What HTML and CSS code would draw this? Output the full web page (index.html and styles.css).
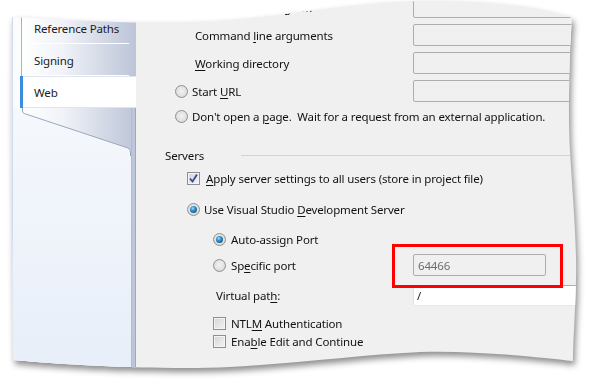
FILE: index.html
```html
<!DOCTYPE html>
<html lang="en">
<head>
  <meta charset="UTF-8" />
  <meta name="viewport" content="width=device-width, initial-scale=1.0" />
  <title>Web - Project Properties</title>
  <link rel="stylesheet" href="styles.css">
</head>
<body>
  <div class="sheet">
    <div class="paper">
      <aside class="nav">
        <div class="tabs">
          <div class="tab">Reference Paths</div>
          <div class="tab">Signing</div>
          <div class="tab active">Web</div>
        </div>
        <div class="nav-rest">
          <div class="nav-panel">
            <svg class="nav-fold" width="118" height="48" viewBox="0 0 118 48">
              <defs>
                <linearGradient id="tabfade" gradientUnits="userSpaceOnUse" x1="9" y1="0" x2="124" y2="0">
                  <stop offset="0" stop-color="#ffffff" />
                  <stop offset="0.35" stop-color="#f1f3f8" />
                  <stop offset="1" stop-color="#bcc4d7" />
                </linearGradient>
              </defs>
              <path d="M9,0 V3 Q9,5 11,5.6 L115,40 Q118,41 118,45 V0 Z" fill="url(#tabfade)" />
              <path d="M9.5,0 V3 Q9.5,5 11.5,5.6 L115,40 Q117.5,41 117.5,45 V48" fill="none" stroke="#9ba6bd" />
            </svg>
          </div>
          <div class="nav-strip"></div>
        </div>
      </aside>

      <main class="page">
        <div class="start">
          <div class="row">
            <div class="row-label"><span class="radio"></span><span>Start e<u>x</u>ternal program</span></div>
            <div class="box"></div>
          </div>
          <div class="row">
            <div class="row-label sub"><span>Command <u>l</u>ine arguments</span></div>
            <div class="box"></div>
          </div>
          <div class="row">
            <div class="row-label sub"><span><u>W</u>orking directory</span></div>
            <div class="box"></div>
          </div>
          <div class="row">
            <div class="row-label"><span class="radio"></span><span>Start <u>U</u>RL</span></div>
            <div class="box"></div>
          </div>
          <div class="row short">
            <div class="row-label wide"><span class="radio"></span><span class="keep">Don't open a <u>p</u>age.  Wait for a request from an external application.</span></div>
          </div>
        </div>

        <div class="section-head">
          <span class="section-title">Servers</span>
          <span class="section-line"></span>
        </div>

        <div class="servers">
          <div class="line check-line">
            <span class="check">
              <svg width="11" height="11" viewBox="0 0 11 11"><path d="M2,5.5 L4.5,8.5 L9,1.5" fill="none" stroke="#34499a" stroke-width="1.8" /></svg>
            </span>
            <span><u>A</u>pply server settings to all users (store in project file)</span>
          </div>
          <div class="line vs-line">
            <span class="radio on"></span>
            <span>Use Visual Studio <u>D</u>evelopment Server</span>
          </div>

          <div class="sub-list">
            <div class="line auto-line">
              <span class="radio on"></span>
              <span>Auto-assi<u>g</u>n Port</span>
            </div>
            <div class="line port-line">
              <div class="port-label"><span class="radio"></span><span>Sp<u>e</u>cific port</span></div>
              <div class="box port-box">64466</div>
            </div>
            <div class="line path-line">
              <div class="path-label"><span>Virtual pat<u>h</u>:</span></div>
              <div class="box path-box">/</div>
            </div>
            <div class="line opt-line first-opt">
              <span class="check"></span>
              <span>NTL<u>M</u> Authentication</span>
            </div>
            <div class="line opt-line">
              <span class="check"></span>
              <span>Ena<u>b</u>le Edit and Continue</span>
            </div>
          </div>
        </div>
      </main>

      <div class="callout"></div>
    </div>
  </div>
</body>
</html>
```

FILE: styles.css
```css
* {
  box-sizing: border-box;
}

body {
  margin: 0;
  background: #fff;
  font-family: "Noto Sans", "Open Sans", sans-serif;
  font-size: 11.5px;
  letter-spacing: -0.15px;
  color: #111;
  overflow: hidden;
}

/* torn sheet with a soft shadow */
.sheet {
  width: 592px;
  height: 384px;
  filter: drop-shadow(2px 4px 3px rgba(0, 0, 0, 0.45));
}

.paper {
  position: relative;
  width: 592px;
  height: 384px;
  display: flex;
  padding-left: 12px;
  background: #f0f0f0;
  clip-path: path("M12,17 C70,20 150,26 230,20 C300,14 360,2 420,1 C490,0 540,8 572,18 C569,60 568,120 570,150 C572,190 577,240 576,280 C575,320 573,340 573,361 C540,357 470,350 420,352 C360,355 300,363 230,367 C170,370 80,366 13,360 C13,250 10,150 12,17 Z");
}

/* left tab column */
.nav {
  width: 124px;
  flex: none;
  display: flex;
  flex-direction: column;
  background: #fbfcfe;
  border-left: 1px solid #cfdcee;
}

.tabs {
  margin-left: 8px;
  padding-top: 12px;
}

.tab {
  height: 32px;
  display: flex;
  align-items: center;
  padding-left: 12px;
  border-left: 1px solid #a9b2c5;
  color: #1b1b1b;
  background:
    linear-gradient(#ffffff, #ffffff) no-repeat 5px 100% / 102px 1px,
    linear-gradient(to right, #ffffff, #f1f3f8 35%, #bcc4d7);
}

.tab.active {
  margin-left: -1px;
  padding-left: 11px;
  border-left: 3px solid #3b8de2;
  background: #fff;
  box-shadow: inset 0 1px 0 #dfe4ee, inset 0 -1px 0 #dfe4ee;
}

.nav-rest {
  flex: 1;
  display: flex;
}

.nav-panel {
  flex: 1;
  background: linear-gradient(#f5f8fc, #e7eef9);
}

.nav-fold {
  display: block;
}

.nav-strip {
  width: 6px;
  background: #bec7da;
  border-left: 1px solid #b2bbcf;
  border-right: 1px solid #a0a9bc;
}

/* main property page */
.page {
  flex: 1;
  min-width: 0;
  padding-left: 29px;
  display: flex;
  flex-direction: column;
}

u {
  text-decoration: underline;
  text-underline-offset: 2px;
}

.start {
  padding-left: 10px;
  margin-top: -7px;
}

.row {
  display: flex;
  align-items: center;
  height: 28px;
}

.row.short {
  height: 22px;
}

.row-label {
  width: 238px;
  flex: none;
  display: flex;
  align-items: center;
  gap: 4px;
  white-space: nowrap;
}

.row-label.sub {
  padding-left: 20px;
}

.row-label.wide {
  width: auto;
}

.keep {
  white-space: pre;
}

.box {
  flex: none;
  width: 200px;
  height: 22px;
  border: 1px solid #adadad;
  border-radius: 2px;
  background: #f0f0f0;
}

.section-head {
  display: flex;
  align-items: center;
  height: 16px;
  margin-top: 20px;
}

.section-title {
  width: 76px;
  flex: none;
}

.section-line {
  flex: 1;
  height: 1px;
  background: #d3d3d3;
}

.servers {
  padding-left: 22px;
}

.line {
  display: flex;
  align-items: center;
  height: 22px;
  white-space: nowrap;
}

.check-line {
  margin-top: 4px;
  gap: 6px;
}

.vs-line {
  margin-top: 9px;
  gap: 4px;
}

.sub-list {
  padding-left: 26px;
}

.auto-line {
  margin-top: 8px;
  gap: 5px;
}

.port-line {
  margin-top: 4px;
}

.port-label {
  width: 200px;
  flex: none;
  display: flex;
  align-items: center;
  gap: 5px;
}

.port-box {
  width: 133px;
  padding-left: 4px;
  display: flex;
  align-items: center;
  color: #6d6d6d;
}

.path-line {
  margin-top: 9px;
  height: 21px;
}

.path-label {
  width: 200px;
  flex: none;
  padding-left: 3px;
}

.path-box {
  height: 21px;
  padding-left: 3px;
  display: flex;
  align-items: center;
  background: #fff;
  border-color: #abadb3 #e2e3ea #e3e9ef #e2e3ea;
  color: #222;
}

.opt-line {
  height: 18px;
  gap: 5px;
}

.first-opt {
  margin-top: 8px;
}

/* Windows 7 style controls */
.radio {
  width: 13px;
  height: 13px;
  flex: none;
  border-radius: 50%;
  border: 1px solid #8e8f8f;
  background: radial-gradient(circle at 50% 45%, #f2f2f2 0%, #e2e2e2 55%, #c9c9c9 100%);
  display: flex;
  align-items: center;
  justify-content: center;
}

.radio.on::after {
  content: "";
  width: 7px;
  height: 7px;
  border-radius: 50%;
  background: radial-gradient(circle at 40% 35%, #9fdcff 0%, #2f88c4 40%, #0d3f66 100%);
}

.check {
  width: 13px;
  height: 13px;
  flex: none;
  border: 1px solid #8e8f8f;
  background: linear-gradient(135deg, #d4d4d4, #f4f4f4);
  box-shadow: inset 0 0 0 1px #f4f4f4;
  display: flex;
  align-items: center;
  justify-content: center;
}

.check svg {
  display: block;
}

.callout {
  position: absolute;
  left: 392px;
  top: 244px;
  width: 171px;
  height: 44px;
  border: 3px solid #ff0000;
}
```
